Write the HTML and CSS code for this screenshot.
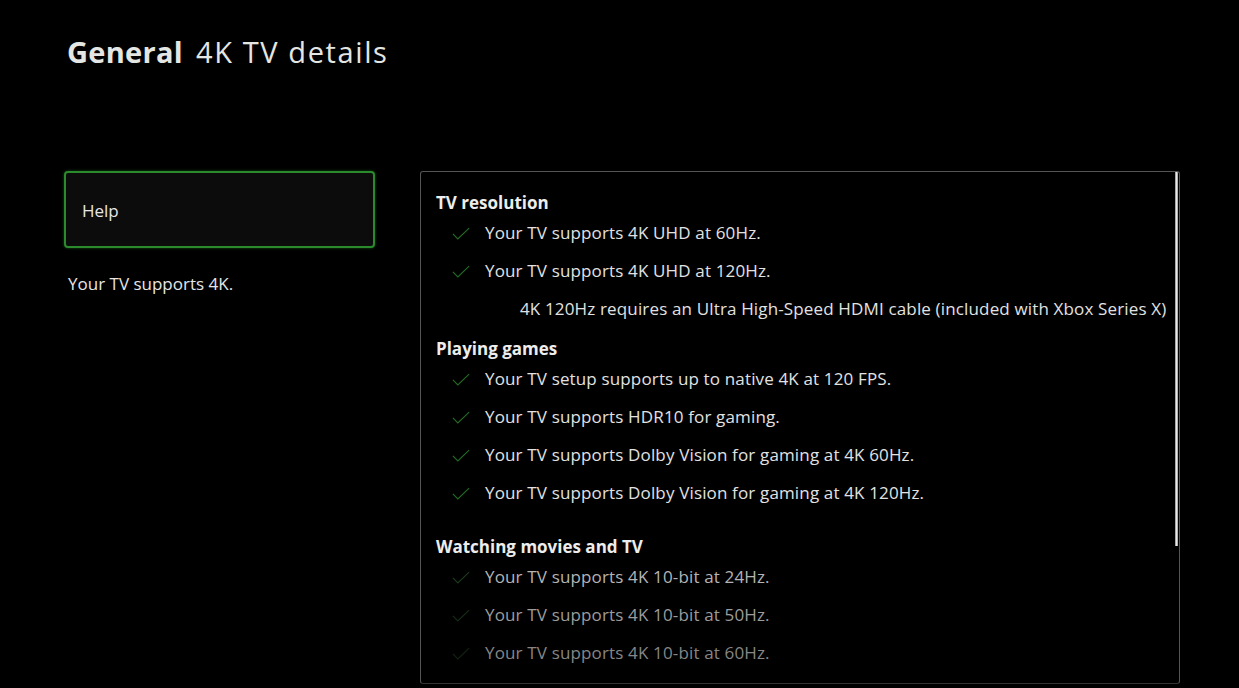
FILE: index.html
```html
<!DOCTYPE html>
<html lang="en">
<head>
    <meta charset="UTF-8">
    <title>4K TV details</title>
    <link rel="stylesheet" href="styles.css">
</head>
<body>
    <div class="page">
        <h1 class="title"><b>General</b> 4K TV details</h1>
        <div class="main">
            <div class="sidebar">
                <div class="help-btn">Help</div>
                <p class="summary">Your TV supports 4K.</p>
            </div>
            <div class="panel">
                <div class="scrollbar"></div>
                <div class="section">
                    <h3>TV resolution</h3>
                    <div class="item"><svg class="check" viewBox="0 0 20 14"><path d="M1 7.5 L6.5 13 L19 1"/></svg>Your TV supports 4K UHD at 60Hz.</div>
                    <div class="item"><svg class="check" viewBox="0 0 20 14"><path d="M1 7.5 L6.5 13 L19 1"/></svg>Your TV supports 4K UHD at 120Hz.</div>
                    <div class="item note">4K 120Hz requires an Ultra High-Speed HDMI cable (included with Xbox Series X)</div>
                </div>
                <div class="section">
                    <h3>Playing games</h3>
                    <div class="item"><svg class="check" viewBox="0 0 20 14"><path d="M1 7.5 L6.5 13 L19 1"/></svg>Your TV setup supports up to native 4K at 120 FPS.</div>
                    <div class="item"><svg class="check" viewBox="0 0 20 14"><path d="M1 7.5 L6.5 13 L19 1"/></svg>Your TV supports HDR10 for gaming.</div>
                    <div class="item"><svg class="check" viewBox="0 0 20 14"><path d="M1 7.5 L6.5 13 L19 1"/></svg>Your TV supports Dolby Vision for gaming at 4K 60Hz.</div>
                    <div class="item"><svg class="check" viewBox="0 0 20 14"><path d="M1 7.5 L6.5 13 L19 1"/></svg>Your TV supports Dolby Vision for gaming at 4K 120Hz.</div>
                </div>
                <div class="section spaced">
                    <h3>Watching movies and TV</h3>
                    <div class="item fade1"><svg class="check" viewBox="0 0 20 14"><path d="M1 7.5 L6.5 13 L19 1"/></svg>Your TV supports 4K 10-bit at 24Hz.</div>
                    <div class="item fade2"><svg class="check" viewBox="0 0 20 14"><path d="M1 7.5 L6.5 13 L19 1"/></svg>Your TV supports 4K 10-bit at 50Hz.</div>
                    <div class="item fade3"><svg class="check" viewBox="0 0 20 14"><path d="M1 7.5 L6.5 13 L19 1"/></svg>Your TV supports 4K 10-bit at 60Hz.</div>
                </div>
            </div>
        </div>
    </div>
</body>
</html>
```
FILE: styles.css
```css
body {
    margin: 0;
    background-color: #000;
    color: #e6e6e6;
    font-family: "Open Sans", "Noto Sans", sans-serif;
}
.page {
    padding: 31px 0 0 64px;
}
.title {
    margin: 0 0 0 3px;
    font-size: 29px;
    font-weight: normal;
    line-height: 42px;
    color: #e4e6e4;
    letter-spacing: 1.6px;
}
.title b {
    font-weight: bold;
    letter-spacing: 0.3px;
    margin-right: 4px;
}
.main {
    display: flex;
    margin-top: 98px;
}
.sidebar {
    width: 311px;
}
.help-btn {
    height: 77px;
    box-sizing: border-box;
    border: 2px solid #2b8a2b;
    border-radius: 4px;
    background-color: #0c0c0c;
    padding: 2px 0 0 16px;
    display: flex;
    align-items: center;
    font-size: 17px;
    box-shadow: 0 0 3px #1a4d1a;
}
.summary {
    margin: 24px 0 0 4px;
    font-size: 17px;
}
.panel {
    position: relative;
    margin-left: 45px;
    width: 760px;
    height: 513px;
    box-sizing: border-box;
    border: 1px solid #555;
    border-bottom-color: #333;
    border-radius: 3px;
    padding: 19px 0 0 15px;
    overflow: hidden;
}
.scrollbar {
    position: absolute;
    top: 0;
    right: 1px;
    width: 3px;
    height: 374px;
    background: linear-gradient(to right, #888, #e8e8e8, #999);
}
.section h3 {
    margin: 0 0 -2px;
    font-size: 17px;
    line-height: 24px;
    font-weight: bold;
    color: #ededed;
}
.section + .section {
    margin-top: 10px;
}
.section.spaced {
    margin-top: 24px;
}
.item {
    height: 38px;
    display: flex;
    align-items: center;
    font-size: 17px;
    letter-spacing: 0.15px;
    color: #e2e2e2;
}
.check {
    width: 18px;
    height: 13px;
    margin: 2px 15px 0 16px;
    fill: none;
    stroke: #236b23;
    stroke-width: 1.3;
}
.note {
    padding-left: 84px;
}
.fade1 {
    color: #b4b4b4;
}
.fade2 {
    color: #9c9c9c;
}
.fade3 {
    color: #868686;
}
.fade1 .check {
    stroke: #1c3a1c;
}
.fade2 .check {
    stroke: #162c16;
}
.fade3 .check {
    stroke: #122212;
}
```
